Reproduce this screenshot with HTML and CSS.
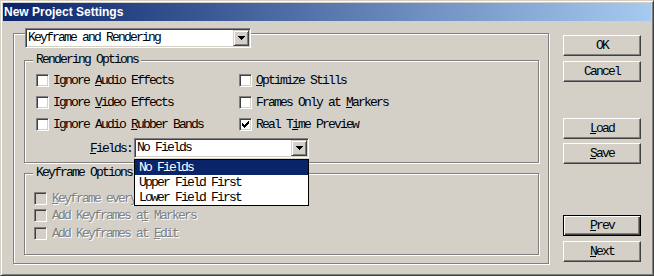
FILE: index.html
```html
<!DOCTYPE html>
<html>
<head>
<meta charset="utf-8">
<link rel="stylesheet" href="styles.css">
</head>
<body>
<div class="window">
  <div class="titlebar">New Project Settings</div>
  <div class="client">
    <div class="outer">
      <div class="combo section-combo">
        <span class="combo-text">Keyframe and Rendering</span>
        <span class="drop-btn"><svg width="7" height="4" viewBox="0 0 7 4"><path d="M0 0H7V1H6V2H5V3H4V4H3V3H2V2H1V1H0Z" fill="#000"/></svg></span>
      </div>
      <div class="group render">
        <div class="group-title">Rendering Options</div>
        <div class="check-grid">
          <label class="check"><span class="box"></span><span>Ignore <u>A</u>udio Effects</span></label>
          <label class="check"><span class="box"></span><span><u>O</u>ptimize Stills</span></label>
          <label class="check"><span class="box"></span><span>Ignore <u>V</u>ideo Effects</span></label>
          <label class="check"><span class="box"></span><span>Frames Only at <u>M</u>arkers</span></label>
          <label class="check"><span class="box"></span><span>Ignore Audio <u>R</u>ubber Bands</span></label>
          <label class="check"><span class="box"><svg width="7" height="7" viewBox="0 0 7 7"><path d="M0 2H1V3H2V4H3V3H4V2H5V1H6V0H7V3H6V4H5V5H4V6H3V7H2V6H1V5H0Z" fill="#000"/></svg></span><span>Real T<u>i</u>me Preview</span></label>
        </div>
        <div class="fields-row">
          <span class="fields-label"><u>F</u>ields:</span>
          <div class="combo fields-combo">
            <span class="combo-text">No Fields</span>
            <span class="drop-btn"><svg width="7" height="4" viewBox="0 0 7 4"><path d="M0 0H7V1H6V2H5V3H4V4H3V3H2V2H1V1H0Z" fill="#000"/></svg></span>
            <div class="dropdown">
              <div class="item selected">No Fields</div>
              <div class="item">Upper Field First</div>
              <div class="item">Lower Field First</div>
            </div>
          </div>
        </div>
      </div>
      <div class="group keygroup">
        <div class="group-title">Keyframe Options</div>
        <div class="key-rows">
          <div class="check disabled"><span class="box"></span><span><u>K</u>eyframe every</span></div>
          <div class="check disabled r2"><span class="box"></span><span>Add Keyframes a<u>t</u> Markers</span></div>
          <div class="check disabled r3"><span class="box"></span><span>Add Keyframes at <u>E</u>dit</span></div>
        </div>
      </div>
    </div>
    <div class="buttons">
      <div class="btn">OK</div>
      <div class="btn b-cancel">Cancel</div>
      <div class="btn b-load"><span><u>L</u>oad</span></div>
      <div class="btn b-save"><span><u>S</u>ave</span></div>
      <div class="btn b-prev default"><span><u>P</u>rev</span></div>
      <div class="btn b-next"><span><u>N</u>ext</span></div>
    </div>
  </div>
</div>
</body>
</html>
```
FILE: styles.css
```css
* { box-sizing: border-box; }
body {
  margin: 0;
  width: 654px;
  height: 276px;
  overflow: hidden;
  background: #d4d0c8;
  font-family: "Liberation Mono", monospace;
  font-size: 13px;
  letter-spacing: -1.8px;
  color: #000;
}
.window {
  width: 654px;
  height: 276px;
  border: 1px solid;
  border-color: #d4d0c8 #404040 #404040 #d4d0c8;
  box-shadow: inset 1px 1px 0 #fff, inset -1px -1px 0 #808080;
  padding: 2px;
  display: flex;
  flex-direction: column;
}
.titlebar {
  flex: none;
  height: 18px;
  background: linear-gradient(to right, #0a246a, #a6caf0);
  color: #fff;
  font-family: "Liberation Sans", Arial, sans-serif;
  font-weight: bold;
  font-size: 12px;
  letter-spacing: 0;
  line-height: 18px;
  padding-left: 1px;
  white-space: nowrap;
}
.client {
  flex: 1;
  display: flex;
  align-items: flex-start;
}
.outer {
  flex: none;
  width: 536px;
  height: 231px;
  margin: 12px 0 0 10px;
  border: 1px solid #808080;
  box-shadow: inset 1px 1px 0 #fff, 1px 1px 0 #fff;
  padding: 0 9px 0 10px;
}
.combo {
  height: 20px;
  background: #fff;
  border: 1px solid;
  border-color: #808080 #fff #fff #808080;
  box-shadow: inset 1px 1px 0 #404040, inset -1px -1px 0 #d4d0c8;
  padding: 1px 1px 1px 2px;
  display: flex;
  align-items: center;
}
.combo-text {
  flex: 1;
  line-height: 16px;
  white-space: nowrap;
  overflow: hidden;
}
.drop-btn {
  flex: none;
  width: 16px;
  height: 16px;
  background: #d4d0c8;
  border: 1px solid;
  border-color: #d4d0c8 #404040 #404040 #d4d0c8;
  box-shadow: inset 1px 1px 0 #fff, inset -1px -1px 0 #808080;
  display: flex;
  align-items: center;
  justify-content: center;
}
.drop-btn svg { display: block; }
.section-combo {
  width: 226px;
  margin: -6px 0 0 1px;
}
.group {
  border: 1px solid #808080;
  box-shadow: inset 1px 1px 0 #fff, 1px 1px 0 #fff;
}
.group-title {
  width: max-content;
  height: 12px;
  line-height: 12px;
  margin: -7px 0 0 8px;
  padding: 0 3px;
  background: #d4d0c8;
  white-space: nowrap;
}
.render {
  margin-top: 12px;
  padding-bottom: 4px;
}
.check-grid {
  display: grid;
  grid-template-columns: 203px auto;
  row-gap: 9px;
  margin: 8px 0 0 11px;
}
.check {
  display: flex;
  align-items: center;
  gap: 4px;
  height: 13px;
  line-height: 13px;
  white-space: nowrap;
}
.box {
  flex: none;
  width: 13px;
  height: 13px;
  background: #fff;
  border: 1px solid;
  border-color: #808080 #fff #fff #808080;
  box-shadow: inset 1px 1px 0 #404040, inset -1px -1px 0 #d4d0c8;
  padding: 2px;
}
.box svg { display: block; }
.fields-row {
  display: flex;
  align-items: center;
  gap: 2px;
  margin: 7px 0 0 65px;
}
.fields-label { white-space: nowrap; }
.fields-combo {
  width: 175px;
  position: relative;
}
.dropdown {
  position: absolute;
  left: -1px;
  top: 20px;
  width: 175px;
  background: #fff;
  border: 1px solid #000;
  z-index: 2;
}
.item {
  height: 15px;
  line-height: 15px;
  padding-left: 4px;
  white-space: nowrap;
}
.item.selected {
  background: #0a246a;
  color: #fff;
}
.keygroup {
  margin-top: 10px;
  padding-bottom: 14px;
}
.key-rows {
  margin: 13px 0 0 9px;
}
.check.disabled {
  gap: 5px;
  color: #808080;
  text-shadow: 1px 1px 0 #fff;
}
.check.disabled .box { background: #d4d0c8; }
.check.r2 { margin-top: 4px; }
.check.r3 { margin-top: 5px; }
.buttons {
  flex: none;
  width: 78px;
  margin: 14px 0 0 14px;
  display: flex;
  flex-direction: column;
}
.btn {
  width: 78px;
  height: 21px;
  border: 1px solid;
  border-color: #fff #404040 #404040 #fff;
  box-shadow: inset -1px -1px 0 #808080;
  display: flex;
  align-items: center;
  justify-content: center;
  line-height: 13px;
  white-space: nowrap;
}
.btn.default {
  border-color: #000;
  box-shadow: inset 1px 1px 0 #fff, inset -1px -1px 0 #404040, inset -2px -2px 0 #808080;
}
.b-cancel { margin-top: 5px; }
.b-load { margin-top: 36px; }
.b-save { margin-top: 4px; }
.b-prev { margin-top: 51px; }
.b-next { margin-top: 5px; }
```
